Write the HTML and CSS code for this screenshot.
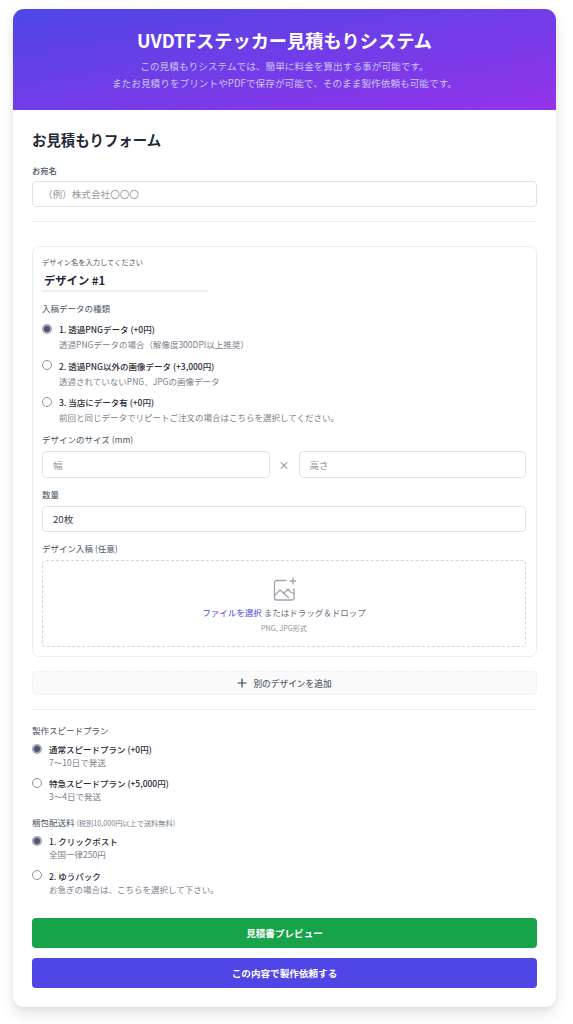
FILE: index.html
```html
<!DOCTYPE html>
<html lang="ja">
<head>
    <meta charset="UTF-8">
    <meta name="viewport" content="width=device-width, initial-scale=1.0">
    <title>UVDTFステッカー見積もりシステム</title>
    <link rel="stylesheet" href="styles.css">
</head>
<body>
    <div class="card">
        <header class="hero">
            <h1>UVDTFステッカー見積もりシステム</h1>
            <p>この見積もりシステムでは、簡単に料金を算出する事が可能です。<br>またお見積りをプリントやPDFで保存が可能で、そのまま製作依頼も可能です。</p>
        </header>
        <form class="form">
            <h2>お見積もりフォーム</h2>
            <label class="small-label">お宛名</label>
            <input class="input-box" type="text" placeholder="（例）株式会社〇〇〇">
            <hr class="rule rule-top">

            <section class="design-box">
                <label class="name-label">デザイン名を入力してください</label>
                <input class="name-input" type="text" value="デザイン #1">
                <div class="group-label">入稿データの種類</div>
                <div class="options">
                    <label class="option">
                        <input type="radio" name="data" checked>
                        <span><b>1. 透過PNGデータ (+0円)</b><small>透過PNGデータの場合（解像度300DPI以上推奨）</small></span>
                    </label>
                    <label class="option">
                        <input type="radio" name="data">
                        <span><b>2. 透過PNG以外の画像データ (+3,000円)</b><small>透過されていないPNG、JPGの画像データ</small></span>
                    </label>
                    <label class="option">
                        <input type="radio" name="data">
                        <span><b>3. 当店にデータ有 (+0円)</b><small>前回と同じデータでリピートご注文の場合はこちらを選択してください。</small></span>
                    </label>
                </div>
                <div class="group-label size-label">デザインのサイズ (mm)</div>
                <div class="size-row">
                    <input class="input-box" type="text" placeholder="幅">
                    <span class="times">×</span>
                    <input class="input-box" type="text" placeholder="高さ">
                </div>
                <div class="group-label count-label">数量</div>
                <input class="input-box" type="text" value="20枚">
                <div class="group-label count-label">デザイン入稿 (任意)</div>
                <div class="drop">
                    <svg class="drop-icon" viewBox="0 0 24 24" fill="none" stroke="#a0a4ad" stroke-width="1.300" stroke-linecap="round" stroke-linejoin="round">
                        <path d="M14 3.500H4.500a2 2 0 0 0-2 2V21a2 2 0 0 0 2 2H20a2 2 0 0 0 2-2v-9"/>
                        <path d="M2.500 18.500l5.500-5.500 8.500 7.500"/>
                        <path d="M12 16l4-4 2.500 3 3.500 1.500"/>
                        <path d="M21 1v6M18 4h6"/>
                    </svg>
                    <div class="drop-text"><a>ファイルを選択</a> またはドラッグ＆ドロップ</div>
                    <div class="drop-note">PNG, JPG形式</div>
                </div>
            </section>

            <button class="add-btn" type="button">
                <svg class="plus" viewBox="0 0 10 10" fill="none" stroke="#374151" stroke-width="1.200" stroke-linecap="round">
                    <path d="M5 1v8M1 5h8"/>
                </svg>
                別のデザインを追加
            </button>
            <hr class="rule rule-mid">

            <div class="group-label">製作スピードプラン</div>
            <div class="options tight">
                <label class="option">
                    <input type="radio" name="speed" checked>
                    <span><b>通常スピードプラン (+0円)</b><small>7〜10日で発送</small></span>
                </label>
                <label class="option">
                    <input type="radio" name="speed">
                    <span><b>特急スピードプラン (+5,000円)</b><small>3〜4日で発送</small></span>
                </label>
            </div>
            <div class="group-label ship-label">梱包配送料 <em>(税別10,000円以上で送料無料)</em></div>
            <div class="options tight">
                <label class="option">
                    <input type="radio" name="ship" checked>
                    <span><b>1. クリックポスト</b><small>全国一律250円</small></span>
                </label>
                <label class="option">
                    <input type="radio" name="ship">
                    <span><b>2. ゆうパック</b><small>お急ぎの場合は、こちらを選択して下さい。</small></span>
                </label>
            </div>

            <button class="btn btn-green" type="button">見積書プレビュー</button>
            <button class="btn btn-indigo" type="button">この内容で製作依頼する</button>
        </form>
    </div>
</body>
</html>
```

FILE: styles.css
```css
* {
    box-sizing: border-box;
}
body {
    margin: 0;
    background: #fff;
    padding: 9px 17px 17px 13px;
    font-family: "Noto Sans CJK JP", "Noto Sans", sans-serif;
    color: #1f2937;
}
.card {
    height: 998px;
    background: #fff;
    border-radius: 11px;
    overflow: hidden;
    box-shadow: 0 7px 14px rgba(0, 0, 0, 0.1), 0 2px 5px rgba(0, 0, 0, 0.05);
}
.hero {
    height: 101px;
    padding-top: 18px;
    text-align: center;
    color: #fff;
    background: linear-gradient(to bottom right, #4f46e5, #9333ea);
}
.hero h1 {
    margin: 0;
    font-size: 18.200px;
    line-height: 26px;
    font-weight: 700;
}
.hero p {
    margin: 5px 0 0;
    font-size: 9.670px;
    line-height: 17px;
    color: #c7c4f5;
}
.form {
    padding: 19px 19px 0;
}
.form h2 {
    margin: 0;
    font-size: 14.400px;
    line-height: 22px;
    font-weight: 700;
}
.small-label {
    display: block;
    margin-top: 13px;
    font-size: 8.300px;
    line-height: 12px;
    font-weight: 500;
    color: #4b5563;
}
.input-box {
    display: block;
    width: 100%;
    height: 26px;
    padding: 0 10px;
    border: 1px solid #e0e2e6;
    border-radius: 4px;
    background: #fff;
    font-family: inherit;
    font-size: 9.600px;
    color: #374151;
    outline: none;
}
.small-label + .input-box {
    margin-top: 5px;
}
.input-box::placeholder {
    color: #9599a1;
}
.rule {
    margin: 0;
    border: 0;
    border-top: 1px solid #eceef0;
}
.rule-top {
    margin-top: 14px;
}
.rule-mid {
    margin-top: 14px;
}
.design-box {
    height: 411px;
    margin-top: 24px;
    padding: 10px 10px 9px 9px;
    border: 1px solid #eceef0;
    border-radius: 7px;
}
.name-label {
    display: block;
    font-size: 7.250px;
    line-height: 11px;
    color: #4b5563;
}
.name-input {
    display: block;
    width: 166px;
    height: 22px;
    margin-top: 2px;
    padding: 0 2px;
    border: 0;
    border-bottom: 2px solid #eceef0;
    font-family: inherit;
    font-size: 11.300px;
    font-weight: 700;
    color: #1f2937;
    outline: none;
}
.group-label {
    font-size: 8.500px;
    line-height: 13px;
    color: #4b5563;
}
.design-box .group-label {
    margin-top: 10px;
}
.options {
    display: flex;
    flex-direction: column;
    gap: 8.700px;
    margin-top: 8px;
}
.option {
    display: flex;
    gap: 7px;
}
.option input {
    appearance: none;
    flex: none;
    width: 10px;
    height: 10px;
    margin: 0.500px 0 0;
    border: 1px solid #8d929b;
    border-radius: 50%;
    background: #fff;
}
.option input:checked {
    border: 2px solid #a3a6b6;
    background: #4f5470;
}
.option b {
    display: block;
    font-size: 8.500px;
    line-height: 13px;
    font-weight: 500;
    color: #1f2937;
}
.option small {
    display: block;
    margin-top: 2px;
    font-size: 8.500px;
    line-height: 13px;
    color: #7b808a;
}
.design-box .size-label {
    margin-top: 9px;
    margin-bottom: 5px;
}
.size-row {
    display: flex;
    align-items: center;
}
.size-row .input-box {
    flex: 1;
    height: 27px;
}
.times {
    width: 29px;
    text-align: center;
    font-size: 11px;
    color: #7b808a;
}
.design-box .count-label {
    margin-top: 10px;
    margin-bottom: 5px;
}
.drop {
    height: 87px;
    padding-top: 16px;
    text-align: center;
    border: 1px dashed #d3d5da;
    border-radius: 4px;
}
.drop-icon {
    display: block;
    width: 24px;
    height: 24px;
    margin: 0 auto;
}
.drop-text {
    margin-top: 4px;
    font-size: 8.500px;
    line-height: 14px;
    color: #6b7280;
}
.drop-text a {
    color: #4f46e5;
}
.drop-note {
    margin-top: 4px;
    font-size: 7.200px;
    line-height: 11px;
    color: #8d929b;
}
.add-btn {
    display: flex;
    align-items: center;
    justify-content: center;
    width: 100%;
    height: 24px;
    margin-top: 14px;
    border: 1px dashed #eef0f1;
    border-radius: 4px;
    background: #fafafa;
    font-family: inherit;
    font-size: 8.700px;
    font-weight: 500;
    color: #5b6370;
}
.plus {
    width: 10px;
    height: 10px;
    margin-right: 6px;
}
.rule-mid + .group-label {
    margin-top: 14px;
}
.tight {
    margin-top: 6px;
    gap: 8.300px;
}
.ship-label + .tight {
    margin-top: 5px;
}
.tight small {
    margin-top: 0;
}
.ship-label {
    margin-top: 13px;
}
.ship-label em {
    font-style: normal;
    font-size: 7.200px;
    color: #7b808a;
}
.btn {
    display: block;
    width: 100%;
    height: 30px;
    border: 0;
    border-radius: 4px;
    font-family: inherit;
    font-size: 9.600px;
    font-weight: 700;
    color: #fff;
}
.btn-green {
    margin-top: 22px;
    background: #16a34a;
}
.btn-indigo {
    margin-top: 10px;
    background: #4f46e5;
}
```
